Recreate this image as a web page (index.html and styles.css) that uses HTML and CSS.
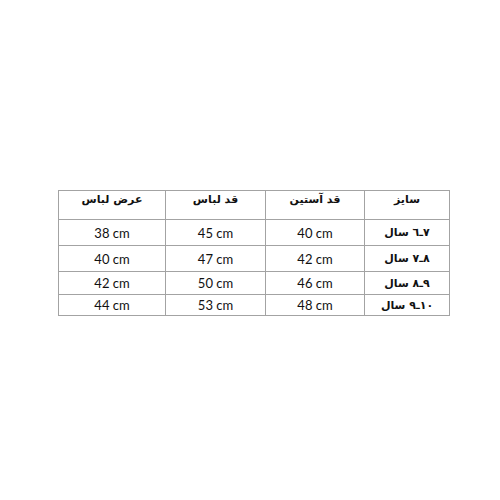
FILE: index.html
```html
<!DOCTYPE html>
<html lang="fa">
<head>
<meta charset="utf-8">
<link rel="stylesheet" href="styles.css">
</head>
<body>
<div class="page">
  <table class="sizes" dir="rtl">
    <colgroup>
      <col class="c-size">
      <col class="c-sleeve">
      <col class="c-length">
      <col class="c-width">
    </colgroup>
    <tr class="head">
      <th>سایز</th>
      <th>قد آستین</th>
      <th>قد لباس</th>
      <th>عرض لباس</th>
    </tr>
    <tr class="r1">
      <td class="age"><bdi dir="ltr">٦&lrm;ـ&lrm;٧</bdi> سال</td>
      <td class="num" dir="ltr">40 cm</td>
      <td class="num" dir="ltr">45 cm</td>
      <td class="num" dir="ltr">38 cm</td>
    </tr>
    <tr class="r2">
      <td class="age"><bdi dir="ltr">٧&lrm;ـ&lrm;٨</bdi> سال</td>
      <td class="num" dir="ltr">42 cm</td>
      <td class="num" dir="ltr">47 cm</td>
      <td class="num" dir="ltr">40 cm</td>
    </tr>
    <tr class="r3">
      <td class="age"><bdi dir="ltr">٨&lrm;ـ&lrm;٩</bdi> سال</td>
      <td class="num" dir="ltr">46 cm</td>
      <td class="num" dir="ltr">50 cm</td>
      <td class="num" dir="ltr">42 cm</td>
    </tr>
    <tr class="r4">
      <td class="age"><bdi dir="ltr">٩&lrm;ـ&lrm;١٠</bdi> سال</td>
      <td class="num" dir="ltr">48 cm</td>
      <td class="num" dir="ltr">53 cm</td>
      <td class="num" dir="ltr">44 cm</td>
    </tr>
  </table>
</div>
</body>
</html>
```

FILE: styles.css
```css
html, body {
  margin: 0;
  padding: 0;
  background: #ffffff;
}

.page {
  width: 500px;
  height: 500px;
  box-sizing: border-box;
  padding: 190px 0 0 58px;
}

.sizes {
  border-collapse: collapse;
  table-layout: fixed;
  width: 392px;
  color: #111;
}

.c-size { width: 85px; }
.c-sleeve { width: 99px; }
.c-length { width: 100px; }
.c-width { width: 107px; }

.sizes th,
.sizes td {
  border: 1px solid #a3a3a3;
  padding: 0;
  text-align: center;
  overflow: hidden;
  white-space: nowrap;
}

.sizes th {
  font-family: "DejaVu Sans", sans-serif;
  font-weight: bold;
  font-size: 11px;
  vertical-align: top;
  padding-top: 2px;
  box-sizing: border-box;
}

.head th { height: 29px; }
.r1 td, .r2 td { height: 25px; }
.r3 td { height: 22px; }
.r4 td { height: 20px; }

.num {
  font-family: Lato, "Liberation Sans", sans-serif;
  font-size: 13px;
  vertical-align: middle;
}

.age {
  font-family: "DejaVu Sans", sans-serif;
  font-weight: bold;
  font-size: 11px;
  vertical-align: middle;
}
```
